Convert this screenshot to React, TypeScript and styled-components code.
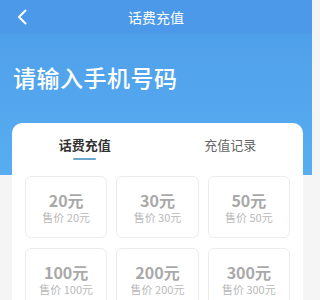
import React, { useState } from 'react';
import styled, { createGlobalStyle } from 'styled-components';

const GlobalStyle = createGlobalStyle`
  body {
    margin: 0;
    background: #f5f5f5;
    font-family: "Noto Sans CJK SC", "Noto Sans", sans-serif;
  }
`;

const Page = styled.div`
  width: 312px;
  min-height: 300px;
  overflow: hidden;
`;

const Hero = styled.div`
  height: 175px;
  background: linear-gradient(180deg, #4d9de9 0%, #58adf0 100%);
`;

const NavBar = styled.div`
  position: relative;
  height: 33px;
  display: flex;
  align-items: center;
  justify-content: center;
  background: #4b99e8;
  box-shadow: 0 1px 2px rgba(0, 0, 0, 0.04);
`;

const BackButton = styled.button`
  position: absolute;
  left: 12px;
  top: 6px;
  width: 20px;
  height: 22px;
  padding: 0;
  border: none;
  background: none;
  display: flex;
  align-items: center;
  justify-content: center;
`;

const NavTitle = styled.div`
  color: #fff;
  font-size: 14px;
  font-weight: 400;
  line-height: 20px;
`;

const Heading = styled.h1`
  margin: 0;
  padding: 28px 13px 0;
  color: #fff;
  font-size: 23px;
  font-weight: 500;
  line-height: 32px;
  letter-spacing: 0.5px;
`;

const Card = styled.div`
  margin: -52px 9px 0 12px;
  background: #fff;
  border-radius: 10px;
  padding-bottom: 14px;
`;

const Tabs = styled.div`
  display: flex;
  padding-top: 13px;
`;

const Tab = styled.div<{ $active?: boolean }>`
  flex: 1;
  display: flex;
  flex-direction: column;
  align-items: center;
  font-size: 13px;
  line-height: 18px;
  font-weight: ${(p) => (p.$active ? 600 : 400)};
  color: ${(p) => (p.$active ? '#333' : '#666')};
  cursor: pointer;

  &::after {
    content: '';
    width: 23px;
    height: 2px;
    margin-top: 4px;
    border-radius: 1px;
    background: ${(p) => (p.$active ? '#6aa7cf' : 'transparent')};
  }
`;

const Grid = styled.div`
  display: grid;
  grid-template-columns: repeat(3, 1fr);
  column-gap: 9px;
  row-gap: 10px;
  padding: 16px 13px 0;
`;

const Tile = styled.div`
  height: 62px;
  box-sizing: border-box;
  border: 1px solid #ececec;
  border-radius: 6px;
  display: flex;
  flex-direction: column;
  align-items: center;
  padding-top: 13px;
`;

const Amount = styled.div`
  font-size: 16px;
  line-height: 20px;
  font-weight: 600;
  color: #a9a9a9;
`;

const Price = styled.div`
  font-size: 11px;
  line-height: 15px;
  color: #b9b9b9;
`;

const amounts = [20, 30, 50, 100, 200, 300];

const App: React.FC = () => {
  const [tab, setTab] = useState(0);

  return (
    <Page>
      <GlobalStyle />
      <Hero>
        <NavBar>
          <BackButton aria-label="返回">
            <svg width="12" height="16" viewBox="0 0 12 16" fill="none">
              <path d="M9.5 1.5 L3 8 L9.5 14.5" stroke="#fff" strokeWidth="2" strokeLinecap="round" strokeLinejoin="round" />
            </svg>
          </BackButton>
          <NavTitle>话费充值</NavTitle>
        </NavBar>
        <Heading>请输入手机号码</Heading>
      </Hero>

      <Card>
        <Tabs>
          <Tab $active={tab === 0} onClick={() => setTab(0)}>话费充值</Tab>
          <Tab $active={tab === 1} onClick={() => setTab(1)}>充值记录</Tab>
        </Tabs>
        <Grid>
          {amounts.map((a) => (
            <Tile key={a}>
              <Amount>{a}元</Amount>
              <Price>售价 {a}元</Price>
            </Tile>
          ))}
        </Grid>
      </Card>
    </Page>
  );
};

export default App;
